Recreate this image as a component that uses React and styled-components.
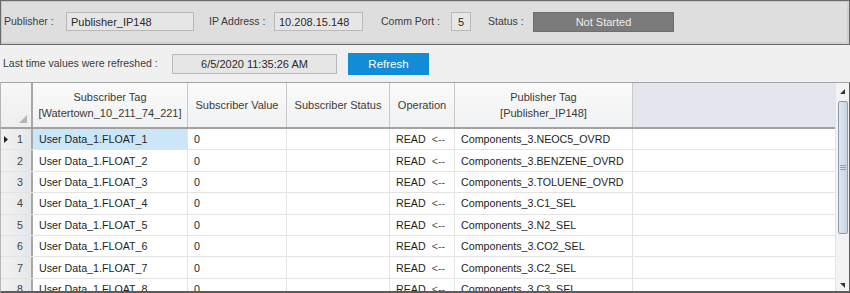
import React from "react";
import styled, { createGlobalStyle } from "styled-components";

const GlobalStyle = createGlobalStyle`
  html, body {
    margin: 0;
    padding: 0;
    background: #f0f0f0;
  }
`;

const Window = styled.div`
  width: 850px;
  height: 293px;
  overflow: hidden;
  background: #f0f0f0;
  font-family: "Liberation Sans", Arial, sans-serif;
  font-size: 10.5px;
  color: #333;
  display: flex;
  flex-direction: column;
`;

const TopPanel = styled.div`
  box-sizing: border-box;
  height: 45px;
  flex: none;
  display: flex;
  align-items: flex-start;
  padding: 11px 0 0 3px;
  background: #dedede;
  border: 1px solid #6a6a6a;
  box-shadow: inset -2px -2px 0 #cfcfcf, inset 1px 1px 0 #c8c8c8;
`;

const RefreshRow = styled.div`
  box-sizing: border-box;
  height: 37px;
  flex: none;
  display: flex;
  align-items: center;
  padding: 0 0 0 3px;
`;

const Label = styled.span`
  display: inline-block;
  width: ${(p) => p.$w}px;
  line-height: 19px;
  color: #3c3c3c;
  white-space: nowrap;
`;

const ReadBox = styled.div`
  box-sizing: border-box;
  width: ${(p) => p.$w}px;
  height: ${(p) => p.$h || 19}px;
  margin-right: ${(p) => p.$mr || 0}px;
  padding: 0 4px;
  display: flex;
  align-items: center;
  justify-content: ${(p) => (p.$center ? "center" : "flex-start")};
  background: #e6e6e6;
  border: 1px solid #b9b9b9;
  color: #2a2a2a;
  font-size: 11px;
  white-space: nowrap;
`;

const StatusBox = styled.div`
  box-sizing: border-box;
  width: 141px;
  height: 20px;
  display: flex;
  align-items: center;
  justify-content: center;
  background: #7a7a7a;
  border: 1px solid #6e6e6e;
  color: #ededed;
  font-size: 11px;
`;

const RefreshButton = styled.button`
  box-sizing: border-box;
  width: 81px;
  height: 22px;
  margin-left: 11px;
  border: none;
  background: #128cd6;
  color: #ffffff;
  font-family: inherit;
  font-size: 11.5px;
  font-weight: normal;
  padding: 0;
`;

const GridFrame = styled.div`
  box-sizing: border-box;
  flex: 1;
  min-height: 0;
  display: flex;
  border-top: 1px solid #a3a3a3;
  border-left: 1px solid #b5b5b5;
  border-right: 1px solid #5c5c5c;
  border-bottom: 2px solid #5c5c5c;
  background: #ffffff;
  overflow: hidden;
`;

const Table = styled.div`
  flex: 1;
  display: flex;
  flex-direction: column;
  font-size: 10.7px;
  color: #1e1e1e;
`;

const columns = "32px 155px 99px 103px 65px 178px 1fr";

const HeaderRow = styled.div`
  display: grid;
  grid-template-columns: ${columns};
  height: 46px;
  flex: none;
  box-sizing: border-box;
  border-bottom: 2px solid #a2a2a2;
`;

const HeadCell = styled.div`
  display: flex;
  align-items: center;
  justify-content: center;
  text-align: center;
  font-size: 11px;
  line-height: 16px;
  color: #3a3a3a;
  background: ${(p) =>
    p.$filler ? "#e3e7ed" : "linear-gradient(#fafafa, #f1f2f3)"};
  border-right: ${(p) => (p.$filler ? "none" : "1px solid #c9c9c9")};
`;

const CornerCell = styled(HeadCell)`
  align-items: flex-end;
  justify-content: flex-end;
  padding: 0 4px 4px 0;
  border-right: 2px solid #a8a8a8;
  background: linear-gradient(#f7f7f7, #eeeeee);
`;

const BodyRow = styled.div`
  display: grid;
  grid-template-columns: ${columns};
  height: 21.4px;
  flex: none;
  box-sizing: border-box;
  border-bottom: 1px solid #e3e3e3;
`;

const RowHead = styled.div`
  display: flex;
  align-items: center;
  justify-content: space-between;
  padding: 0 8px 0 3px;
  background: linear-gradient(90deg, #f1f1f1, #e4e7ea);
  border-right: 2px solid #a8a8a8;
  color: #444;
`;

const Cell = styled.div`
  display: flex;
  align-items: center;
  padding-left: 6px;
  white-space: nowrap;
  overflow: hidden;
  background: ${(p) => (p.$selected ? "#cce6f9" : "transparent")};
  border-right: ${(p) => (p.$last ? "none" : "1px solid #e3e3e3")};
`;

const Arrow = styled.span`
  color: #555;
`;

const Scrollbar = styled.div`
  width: 13px;
  display: flex;
  flex-direction: column;
  align-items: center;
  background: #f3f3f3;
  border-left: 1px solid #e6e6e6;
`;

const ScrollArrow = styled.div`
  height: ${(p) => p.$h}px;
  flex: none;
  display: flex;
  align-items: center;
  justify-content: center;
`;

const Track = styled.div`
  flex: 1;
  width: 100%;
  display: flex;
  flex-direction: column;
  align-items: center;
`;

const Thumb = styled.div`
  box-sizing: border-box;
  width: 10px;
  height: 133px;
  margin-top: 1px;
  border: 1px solid #8e9bb0;
  border-radius: 2px;
  background: linear-gradient(90deg, #dfe6ef, #c9d3e1);
  display: flex;
  align-items: center;
  justify-content: center;
`;

const Grip = styled.div`
  width: 6px;
  height: 5px;
  background: repeating-linear-gradient(#8f9bb0 0 1px, transparent 1px 2px);
`;

const rows = [
  ["User Data_1.FLOAT_1", "Components_3.NEOC5_OVRD"],
  ["User Data_1.FLOAT_2", "Components_3.BENZENE_OVRD"],
  ["User Data_1.FLOAT_3", "Components_3.TOLUENE_OVRD"],
  ["User Data_1.FLOAT_4", "Components_3.C1_SEL"],
  ["User Data_1.FLOAT_5", "Components_3.N2_SEL"],
  ["User Data_1.FLOAT_6", "Components_3.CO2_SEL"],
  ["User Data_1.FLOAT_7", "Components_3.C2_SEL"],
  ["User Data_1.FLOAT_8", "Components_3.C3_SEL"],
];

export default function App() {
  return (
    <>
      <GlobalStyle />
      <Window>
        <TopPanel>
          <Label $w={62}>Publisher :</Label>
          <ReadBox $w={128} $mr={15}>Publisher_IP148</ReadBox>
          <Label $w={65}>IP Address :</Label>
          <ReadBox $w={89} $mr={18}>10.208.15.148</ReadBox>
          <Label $w={70}>Comm Port :</Label>
          <ReadBox $w={20} $mr={17} $center>5</ReadBox>
          <Label $w={45}>Status :</Label>
          <StatusBox>Not Started</StatusBox>
        </TopPanel>

        <RefreshRow>
          <Label $w={169}>Last time values were refreshed :</Label>
          <ReadBox $w={165} $h={20} $center>6/5/2020 11:35:26 AM</ReadBox>
          <RefreshButton>Refresh</RefreshButton>
        </RefreshRow>

        <GridFrame>
          <Table>
            <HeaderRow>
              <CornerCell>
                <svg width="8" height="8" viewBox="0 0 8 8">
                  <polygon points="8,0 8,8 0,8" fill="#b4b4b4" />
                </svg>
              </CornerCell>
              <HeadCell>
                Subscriber Tag
                <br />
                [Watertown_10_211_74_221]
              </HeadCell>
              <HeadCell>Subscriber Value</HeadCell>
              <HeadCell>Subscriber Status</HeadCell>
              <HeadCell>Operation</HeadCell>
              <HeadCell>
                Publisher Tag
                <br />
                [Publisher_IP148]
              </HeadCell>
              <HeadCell $filler />
            </HeaderRow>
            {rows.map(([sub, pub], i) => (
              <BodyRow key={sub}>
                <RowHead>
                  <span>
                    {i === 0 && (
                      <svg width="4" height="7" viewBox="0 0 4 7">
                        <polygon points="0,0 4,3.5 0,7" fill="#222" />
                      </svg>
                    )}
                  </span>
                  <span>{i + 1}</span>
                </RowHead>
                <Cell $selected={i === 0}>{sub}</Cell>
                <Cell>0</Cell>
                <Cell />
                <Cell>
                  READ&nbsp;&nbsp;<Arrow>&lt;--</Arrow>
                </Cell>
                <Cell>{pub}</Cell>
                <Cell $last />
              </BodyRow>
            ))}
          </Table>
          <Scrollbar>
            <ScrollArrow $h={17}>
              <svg width="5" height="5" viewBox="0 0 5 5">
                <polygon points="5,0 5,5 0,5" fill="#333" />
              </svg>
            </ScrollArrow>
            <Track>
              <Thumb>
                <Grip />
              </Thumb>
            </Track>
            <ScrollArrow $h={12}>
              <svg width="5" height="5" viewBox="0 0 5 5">
                <polygon points="0,0 5,0 5,5" fill="#333" />
              </svg>
            </ScrollArrow>
          </Scrollbar>
        </GridFrame>
      </Window>
    </>
  );
}
